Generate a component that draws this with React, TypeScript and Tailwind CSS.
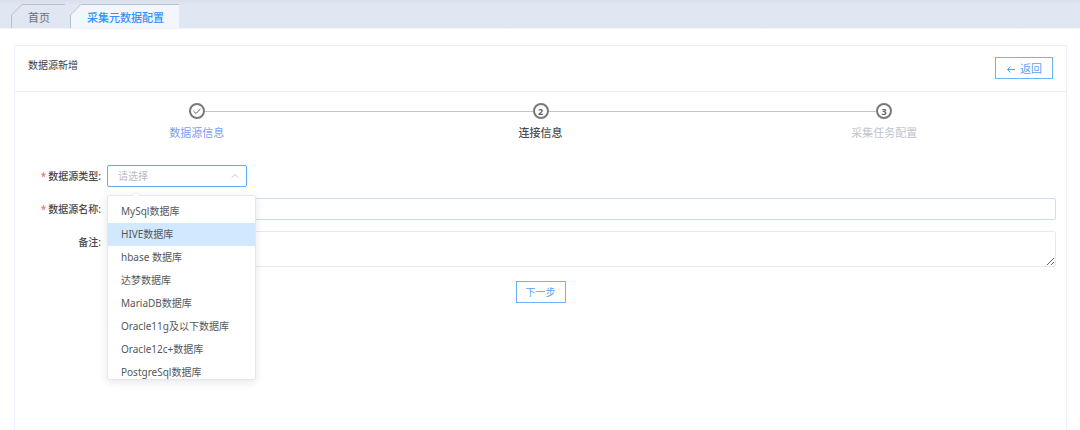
import { useState } from 'react';
import clsx from 'clsx';

interface Tab {
  key: string;
  label: string;
}

const tabs: Tab[] = [
  { key: 'home', label: '首页' },
  { key: 'meta', label: '采集元数据配置' },
];

const steps = [
  { title: '数据源信息', color: 'text-[#7d9dfb]' },
  { title: '连接信息', color: 'text-[#4a4c50] font-medium' },
  { title: '采集任务配置', color: 'text-[#c0c4cc]' },
];

const dbTypes = [
  'MySql数据库',
  'HIVE数据库',
  'hbase 数据库',
  '达梦数据库',
  'MariaDB数据库',
  'Oracle11g及以下数据库',
  'Oracle12c+数据库',
  'PostgreSql数据库',
];

function TabBar() {
  const [active, setActive] = useState('meta');

  return (
    <nav className="flex h-[29px] items-end gap-[5px] border-b border-[#f3f2f6] bg-linear-to-b from-[#d9e0ec] to-[#e0e6f2] to-20% pl-[11px]">
      {tabs.map((tab) => {
        const isActive = tab.key === active;
        return (
          <button
            key={tab.key}
            type="button"
            onClick={() => setActive(tab.key)}
            className={clsx('flex h-6 text-[11px]', isActive ? 'text-[#2f93fb]' : 'text-[#6b7079]')}
          >
            <svg className="h-6 w-3 shrink-0" viewBox="0 0 12 24">
              <path d="M0.5 24V11L11 0.5H12V24Z" fill={isActive ? '#f3f7fd' : 'none'} />
              <path d="M0.5 24V11L11 0.5H12" fill="none" stroke="#b3c1d1" />
            </svg>
            <span
              className={clsx(
                'flex h-6 items-center border-t border-[#b3c1d1] pt-[3px] pr-[15px] pl-[5px]',
                isActive && 'bg-[#f3f7fd] font-medium'
              )}
            >
              {tab.label}
            </span>
          </button>
        );
      })}
    </nav>
  );
}

function Steps() {
  return (
    <ol className="grid grid-cols-3">
      {steps.map((step, i) => (
        <li key={step.title} className="flex flex-col items-center">
          <div className="flex w-full items-center">
            <span className={clsx('h-px flex-1', i > 0 && 'bg-[#c0c4cc]')} />
            <span className="flex size-4 items-center justify-center rounded-full border-2 border-[#77797d] text-[9px] leading-none font-bold text-[#606266]">
              {i === 0 ? (
                <svg className="size-2.5" viewBox="0 0 10 10" fill="none" stroke="#606266">
                  <path d="M1.5 5.2L4 7.5L8.5 2.8" />
                </svg>
              ) : (
                i + 1
              )}
            </span>
            <span className={clsx('h-px flex-1', i < steps.length - 1 && 'bg-[#c0c4cc]')} />
          </div>
          <span className={clsx('mt-[5px] text-[11px] leading-[18px]', step.color)}>{step.title}</span>
        </li>
      ))}
    </ol>
  );
}

// 表单标签
function Label({ htmlFor, text, required }: { htmlFor: string; text: string; required?: boolean }) {
  return (
    <label htmlFor={htmlFor} className="h-[22px] w-[82px] shrink-0 pr-1.5 text-right leading-[22px] font-medium text-[#46484c]">
      {required && <span className="mr-0.5 text-[#f56c6c]">*</span>}
      {text}:
    </label>
  );
}

function TypeSelect() {
  const [open, setOpen] = useState(true);
  const [value, setValue] = useState('');
  const [hovered, setHovered] = useState('HIVE数据库');

  const choose = (type: string) => {
    setValue(type);
    setOpen(false);
  };

  return (
    <div className="relative w-[140px]">
      <select
        id="type"
        value={value}
        onMouseDown={(e) => {
          e.preventDefault();
          setOpen(!open);
        }}
        onChange={(e) => setValue(e.target.value)}
        className={clsx(
          'block h-[22px] w-full appearance-none rounded-xs border border-[#5cabfa] bg-white px-2.5 outline-none',
          value ? 'text-[#606266]' : 'text-[#b8bcc5]'
        )}
      >
        <option value="">请选择</option>
        {dbTypes.map((type) => (
          <option key={type} value={type}>{type}</option>
        ))}
      </select>
      <svg
        className={clsx('pointer-events-none absolute top-[7px] right-2 size-2', !open && 'rotate-180')}
        viewBox="0 0 8 8"
        fill="none"
        stroke="#c0c4cc"
      >
        <path d="M0.8 5.8L4 2.4L7.2 5.8" />
      </svg>

      {open && (
        <div className="absolute top-[30px] left-0 z-10 w-[149px] rounded-xs border border-[#e4e7ed] bg-white shadow-[0_2px_8px_rgba(0,0,0,0.1)]">
          <svg className="absolute -top-1 left-6 h-[5px] w-2" viewBox="0 0 8 5">
            <path d="M0 4.5L4 0.5L8 4.5V5H0Z" fill="#fff" />
            <path d="M0 4L4 0.5L8 4" fill="none" stroke="#ebeef5" />
          </svg>
          <ul role="listbox" className="h-[183px] overflow-hidden pt-1">
            {dbTypes.map((type) => (
              <li
                key={type}
                role="option"
                aria-selected={type === value}
                onMouseEnter={() => setHovered(type)}
                onClick={() => choose(type)}
                className={clsx(
                  'h-[23px] cursor-pointer px-[13px] leading-[23px] whitespace-nowrap text-[#55575b]',
                  type === hovered && 'bg-[#d2e8ff]'
                )}
              >
                {type}
              </li>
            ))}
          </ul>
        </div>
      )}
    </div>
  );
}

export default function App() {
  return (
    <div className="flex min-h-screen flex-col bg-white font-['Noto_Sans','Noto_Sans_CJK_SC',sans-serif] text-[10px]">
      <TabBar />

      <main className="mt-4 mr-[13px] ml-3.5 flex-1 rounded-t-xs border border-b-0 border-[#ebeff9]">
        <header className="flex h-[46px] items-start justify-between border-b border-[#ebeff9] px-[13px] pt-[11px]">
          <h1 className="leading-4 text-[#3c3e42]">数据源新增</h1>
          <button
            type="button"
            className="flex h-[22px] w-[58px] items-center justify-center gap-1 border border-[#6db3fa] pt-[3px] text-[11px] text-[#5b9ff5]"
          >
            <svg className="size-2.5" viewBox="0 0 10 10" fill="none" stroke="currentColor">
              <path d="M9 4.5H1.5M4.5 1.5L1.5 4.5L4.5 7.5" />
            </svg>
            返回
          </button>
        </header>

        <div className="px-2.5 pt-[11px]">
          <Steps />

          <form className="mt-[23px] flex flex-col gap-[11px]" onSubmit={(e) => e.preventDefault()}>
            <div className="flex">
              <Label htmlFor="type" text="数据源类型" required />
              <TypeSelect />
            </div>
            <div className="flex">
              <Label htmlFor="name" text="数据源名称" required />
              <input
                id="name"
                type="text"
                className="h-[22px] min-w-0 flex-1 rounded-xs border border-[#c9dff2] px-2.5 outline-none"
              />
            </div>
            <div className="flex">
              <Label htmlFor="remark" text="备注" />
              <textarea
                id="remark"
                className="block h-9 min-w-0 flex-1 resize-y rounded-xs border border-[#e6e9ef] px-2.5 py-1 outline-none"
              />
            </div>
            <button
              type="submit"
              className="mt-[3px] h-[22px] w-[50px] self-center border border-[#6db3fa] text-[#5b9ff5]"
            >
              下一步
            </button>
          </form>
        </div>
      </main>
    </div>
  );
}
